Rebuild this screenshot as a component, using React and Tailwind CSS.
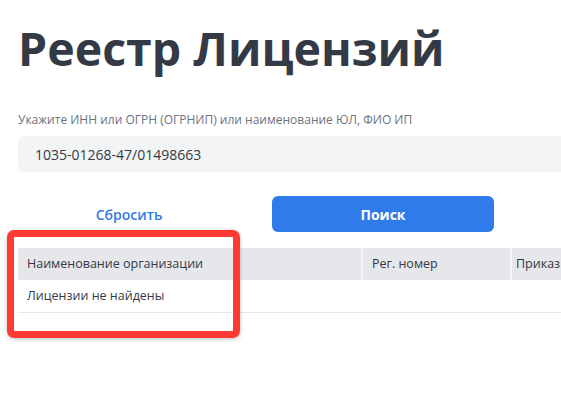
export default function App() {
  return (
    <div className="relative w-[561px] h-[407px] overflow-hidden bg-white" style={{ fontFamily: '"Open Sans", "Noto Sans", sans-serif' }}>
      <div className="pl-[18px] pt-[24px]">
        <h1 className="text-[46.5px] leading-[48px] font-bold text-[#343a45] whitespace-nowrap">Реестр Лицензий</h1>
        <div className="mt-[40px] text-[12px] leading-[16px] text-[#6b7280] whitespace-nowrap">Укажите ИНН или ОГРН (ОГРНИП) или наименование ЮЛ, ФИО ИП</div>
        <div className="mt-[8px] h-[36px] w-[600px] rounded-md bg-[#f3f4f6] flex items-center pl-[17px] text-[14px] text-[#343a45]">1035-01268-47/01498663</div>
        <div className="mt-[24px] flex gap-[32px]">
          <button className="w-[222px] h-[36px] text-[14px] font-semibold text-[#2f7bea]">Сбросить</button>
          <button className="w-[222px] h-[36px] rounded-md bg-[#2f7bea] text-[14px] font-bold text-white">Поиск</button>
        </div>
        <div className="mt-[16px] w-[600px] text-[12.5px] text-[#343a45]">
          <div className="flex h-[32px] bg-[#e5e7eb] items-center">
            <div className="w-[345px] h-full flex items-center pl-[9px] border-r-2 border-[#f3f4f6]">Наименование организации</div>
            <div className="w-[149px] h-full flex items-center pl-[9px] border-r-2 border-[#f3f4f6]">Рег. номер</div>
            <div className="flex-1 h-full flex items-center pl-[4px]">Приказ</div>
          </div>
          <div className="h-[33px] flex items-center pl-[9px] border-b border-[#e5e7eb]">Лицензии не найдены</div>
        </div>
      </div>
      <div className="absolute left-[7px] top-[230px] w-[233px] h-[108px] rounded-[7px] border-[7px] border-[#fe3a33] shadow-[0_1px_4px_rgba(0,0,0,0.25)]"></div>
    </div>
  );
}
